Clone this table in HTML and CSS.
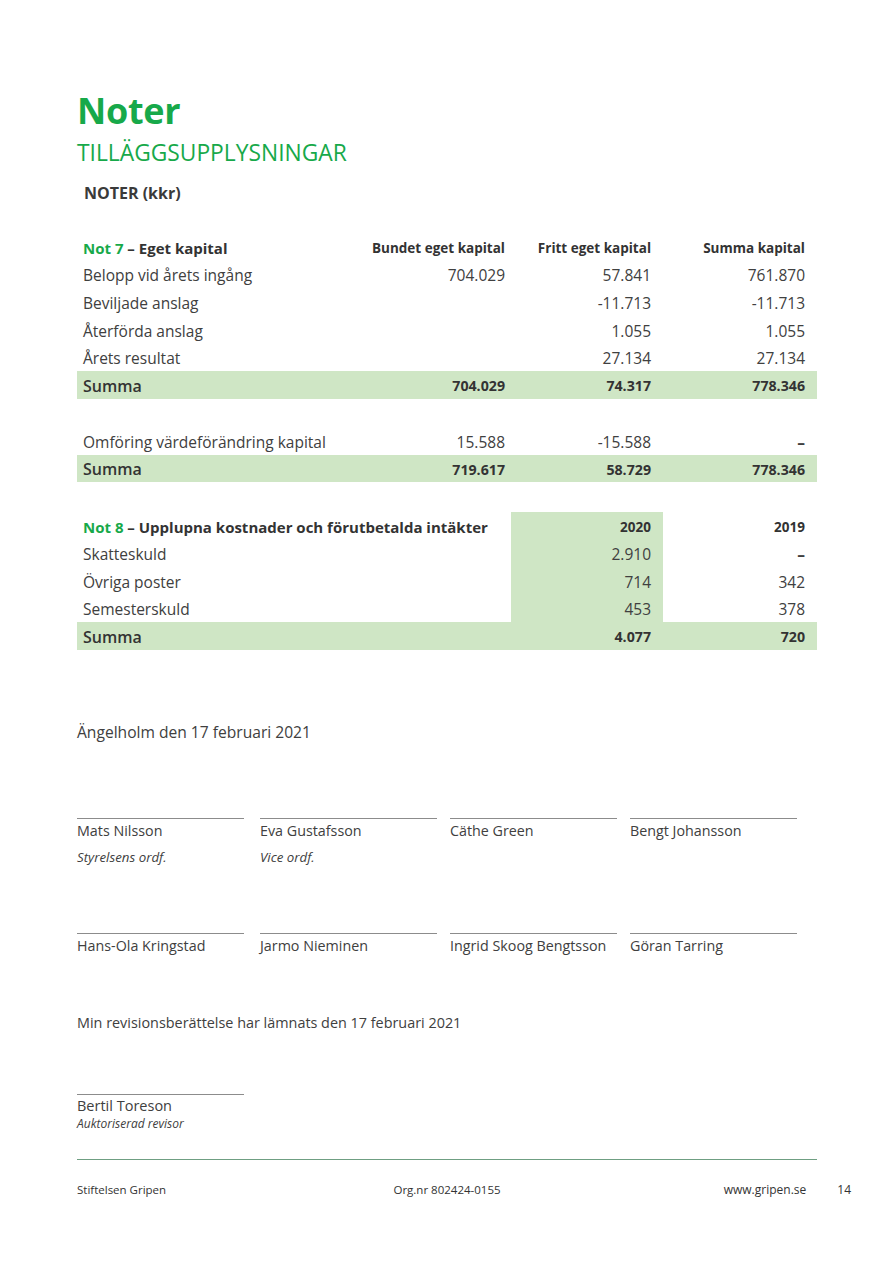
FILE: index.html
```html
<!DOCTYPE html>
<html lang="sv">
<head>
<meta charset="utf-8">
<title>Noter</title>
<link rel="stylesheet" href="styles.css">
</head>
<body>
<div class="page">
  <header class="title-block">
    <h1 class="title">Noter</h1>
    <p class="subtitle">TILLÄGGSUPPLYSNINGAR</p>
    <h2 class="section">NOTER (kkr)</h2>
  </header>

  <section class="table t1">
    <div class="row head">
      <div class="label"><span><span class="green">Not 7</span> – Eget kapital</span></div>
      <div class="num">Bundet eget kapital</div>
      <div class="num">Fritt eget kapital</div>
      <div class="num">Summa kapital</div>
    </div>
    <div class="row">
      <div class="label">Belopp vid årets ingång</div>
      <div class="num">704.029</div>
      <div class="num">57.841</div>
      <div class="num">761.870</div>
    </div>
    <div class="row">
      <div class="label">Beviljade anslag</div>
      <div class="num"></div>
      <div class="num">-11.713</div>
      <div class="num">-11.713</div>
    </div>
    <div class="row">
      <div class="label">Återförda anslag</div>
      <div class="num"></div>
      <div class="num">1.055</div>
      <div class="num">1.055</div>
    </div>
    <div class="row">
      <div class="label">Årets resultat</div>
      <div class="num"></div>
      <div class="num">27.134</div>
      <div class="num">27.134</div>
    </div>
    <div class="row sum">
      <div class="label">Summa</div>
      <div class="num">704.029</div>
      <div class="num">74.317</div>
      <div class="num">778.346</div>
    </div>
    <div class="row spacer"></div>
    <div class="row">
      <div class="label">Omföring värdeförändring kapital</div>
      <div class="num">15.588</div>
      <div class="num">-15.588</div>
      <div class="num dash">–</div>
    </div>
    <div class="row sum">
      <div class="label">Summa</div>
      <div class="num">719.617</div>
      <div class="num">58.729</div>
      <div class="num">778.346</div>
    </div>
  </section>

  <section class="table t2">
    <div class="row head">
      <div class="label"><span><span class="green">Not 8</span> – Upplupna kostnader och förutbetalda intäkter</span></div>
      <div class="num hl">2020</div>
      <div class="num">2019</div>
    </div>
    <div class="row">
      <div class="label">Skatteskuld</div>
      <div class="num hl">2.910</div>
      <div class="num dash">–</div>
    </div>
    <div class="row">
      <div class="label">Övriga poster</div>
      <div class="num hl">714</div>
      <div class="num">342</div>
    </div>
    <div class="row">
      <div class="label">Semesterskuld</div>
      <div class="num hl">453</div>
      <div class="num">378</div>
    </div>
    <div class="row sum">
      <div class="label">Summa</div>
      <div class="num">4.077</div>
      <div class="num">720</div>
    </div>
  </section>

  <p class="place">Ängelholm den 17 februari 2021</p>

  <div class="signatures first">
    <div class="sig"><div class="name">Mats Nilsson</div><div class="role">Styrelsens ordf.</div></div>
    <div class="sig"><div class="name">Eva Gustafsson</div><div class="role">Vice ordf.</div></div>
    <div class="sig"><div class="name">Cäthe Green</div></div>
    <div class="sig"><div class="name">Bengt Johansson</div></div>
  </div>

  <div class="signatures second">
    <div class="sig"><div class="name">Hans-Ola Kringstad</div></div>
    <div class="sig"><div class="name">Jarmo Nieminen</div></div>
    <div class="sig"><div class="name">Ingrid Skoog Bengtsson</div></div>
    <div class="sig"><div class="name">Göran Tarring</div></div>
  </div>

  <p class="audit">Min revisionsberättelse har lämnats den 17 februari 2021</p>

  <div class="signatures auditor">
    <div class="sig"><div class="name">Bertil Toreson</div><div class="role small">Auktoriserad revisor</div></div>
  </div>

  <footer class="footer">
    <div class="f-left">Stiftelsen Gripen</div>
    <div class="f-center">Org.nr 802424-0155</div>
    <div class="f-right"><span class="url">www.gripen.se</span><span class="pageno">14</span></div>
  </footer>
</div>
</body>
</html>
```
FILE: styles.css
```css
* { box-sizing: border-box; }
html, body { margin: 0; padding: 0; background: #fff; }
body {
  font-family: "Open Sans", "Liberation Sans", sans-serif;
  color: #404040;
}
.page {
  width: 892px;
  padding: 89px 75px 0 77px;
}
.title {
  margin: 0;
  font-size: 36px;
  line-height: 44px;
  font-weight: 700;
  color: #17a94a;
  letter-spacing: -0.3px;
}
.subtitle {
  margin: 6px 0 0 0;
  font-size: 22.8px;
  line-height: 28px;
  font-weight: 400;
  color: #17a94a;
}
.section {
  margin: 15px 0 0 7px;
  font-size: 16px;
  line-height: 22px;
  font-weight: 700;
  color: #3a3a3a;
}
.green { color: #17a94a; }

.table { width: 740px; }
.t1 { margin-top: 29px; }
.t2 { margin-top: 29.5px; }
.row {
  display: grid;
  height: 27.6px;
  align-items: center;
  font-size: 15.5px;
}
.t1 .row { grid-template-columns: 1fr 146px 146px 154px; }
.t2 .row { grid-template-columns: 1fr 152px 154px; }
.row > div { height: 100%; display: flex; align-items: center; padding-top: 2px; }
.label { padding-left: 6px; white-space: nowrap; }
.num { justify-content: flex-end; padding-right: 12px; }
.row.head { font-size: 13.5px; font-weight: 700; color: #333; }
.row.head .label { font-size: 15px; }
.row.sum {
  background: #cfe6c5;
  font-weight: 700;
  font-size: 14.2px;
  color: #333;
}
.row.sum .label { font-size: 16px; font-weight: 600; }
.row.spacer { height: 28.5px; }
.hl { background: #cfe6c5; }
.dash { font-weight: 700; }

.place {
  margin: 71px 0 0 0;
  font-size: 15.6px;
  line-height: 22px;
}
.signatures {
  display: grid;
  grid-template-columns: 183px 190px 180px 167px;
}
.signatures.auditor { grid-template-columns: 167px; }
.signatures.first { margin-top: 75px; }
.signatures.second { margin-top: 66px; }
.signatures.auditor { margin-top: 60px; }
.sig { border-top: 1px solid #8c8c8c; }
.signatures .sig:nth-child(1) { margin-right: 16px; }
.signatures .sig:nth-child(2),
.signatures .sig:nth-child(3) { margin-right: 13px; }
.auditor .sig:nth-child(1) { margin-right: 0; }
.name {
  font-size: 14.3px;
  line-height: 22px;
  margin-top: 1px;
  white-space: nowrap;
}
.role {
  margin-top: 5px;
  font-size: 13.3px;
  line-height: 20px;
  font-style: italic;
}
.auditor .name { line-height: 20px; font-size: 14.5px; }
.role.small { margin-top: 0; font-size: 12px; line-height: 16px; }
.audit {
  margin: 55px 0 0 0;
  font-size: 14.4px;
  line-height: 22px;
}
.footer {
  margin-top: 27px;
  width: 740px;
  border-top: 1.5px solid #6f9f82;
  padding-top: 22px;
  display: grid;
  grid-template-columns: 1fr auto 1fr;
  font-size: 11.5px;
  line-height: 16px;
  color: #333;
}
.f-center { text-align: center; }
.f-right { display: flex; justify-content: flex-end; padding-right: 10px; }
.url { font-size: 12px; }
.pageno { margin-left: 31px; margin-right: -44px; font-size: 12px; }
```
